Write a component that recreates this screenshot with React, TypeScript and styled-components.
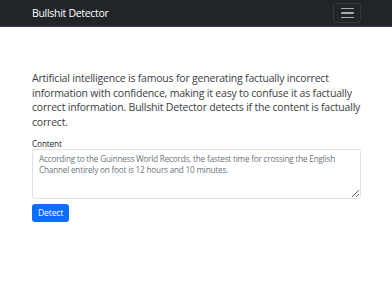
import styled, { createGlobalStyle } from 'styled-components';

const GlobalStyle = createGlobalStyle`
  body {
    margin: 0;
    background: #ffffff;
    font-family: 'Open Sans', 'Noto Sans', sans-serif;
    color: #212529;
  }
`;

const Navbar = styled.nav`
  background-color: #212529;
  height: 27px;
  padding: 0 31px 0 32px;
  display: flex;
  align-items: center;
  justify-content: space-between;
  border-bottom: 1px solid #3a3d41;
  box-sizing: border-box;
`;

const Brand = styled.a`
  color: #ffffff;
  font-size: 10.5px;
  letter-spacing: -0.3px;
  text-decoration: none;
`;

const Toggler = styled.button`
  width: 28px;
  height: 20px;
  background: transparent;
  border: 1px solid #34383d;
  border-radius: 3px;
  display: flex;
  flex-direction: column;
  align-items: center;
  justify-content: center;
  gap: 3px;
  padding: 0;
`;

const TogglerBar = styled.span`
  display: block;
  width: 13px;
  height: 1.5px;
  background: #a9abad;
  border-radius: 1px;
`;

const Main = styled.main`
  padding: 44px 31px 0 32px;
`;

const Lead = styled.p`
  margin: 0 0 9px;
  font-size: 10.5px;
  letter-spacing: -0.2px;
  line-height: 14.7px;
  font-weight: 400;
  color: #3a3e42;
`;

const Label = styled.label`
  display: block;
  font-size: 8.2px;
  line-height: 10px;
  letter-spacing: -0.1px;
  color: #212529;
`;

const TextArea = styled.textarea`
  display: block;
  width: 100%;
  height: 50px;
  box-sizing: border-box;
  border: 1px solid #dee2e6;
  border-radius: 3px;
  padding: 3px 6px;
  font-family: 'Open Sans', 'Noto Sans', sans-serif;
  font-size: 8.2px;
  letter-spacing: -0.2px;
  line-height: 11.5px;
  color: #6c757d;
  resize: vertical;
  margin: 0 0 5px;
`;

const Button = styled.button`
  display: block;
  background-color: #0d6efd;
  color: #ffffff;
  border: none;
  border-radius: 3px;
  font-family: 'Open Sans', 'Noto Sans', sans-serif;
  font-size: 8.6px;
  letter-spacing: -0.15px;
  height: 18px;
  padding: 0 6px;
`;

export default function App() {
  return (
    <>
      <GlobalStyle />
      <Navbar>
        <Brand>Bullshit Detector</Brand>
        <Toggler>
          <TogglerBar />
          <TogglerBar />
          <TogglerBar />
        </Toggler>
      </Navbar>
      <Main>
        <Lead>
          Artificial intelligence is famous for generating factually incorrect
          information with confidence, making it easy to confuse it as factually
          correct information. Bullshit Detector detects if the content is
          factually correct.
        </Lead>
        <Label>Content</Label>
        <TextArea defaultValue="According to the Guinness World Records, the fastest time for crossing the English Channel entirely on foot is 12 hours and 10 minutes." />
        <Button>Detect</Button>
      </Main>
    </>
  );
}
